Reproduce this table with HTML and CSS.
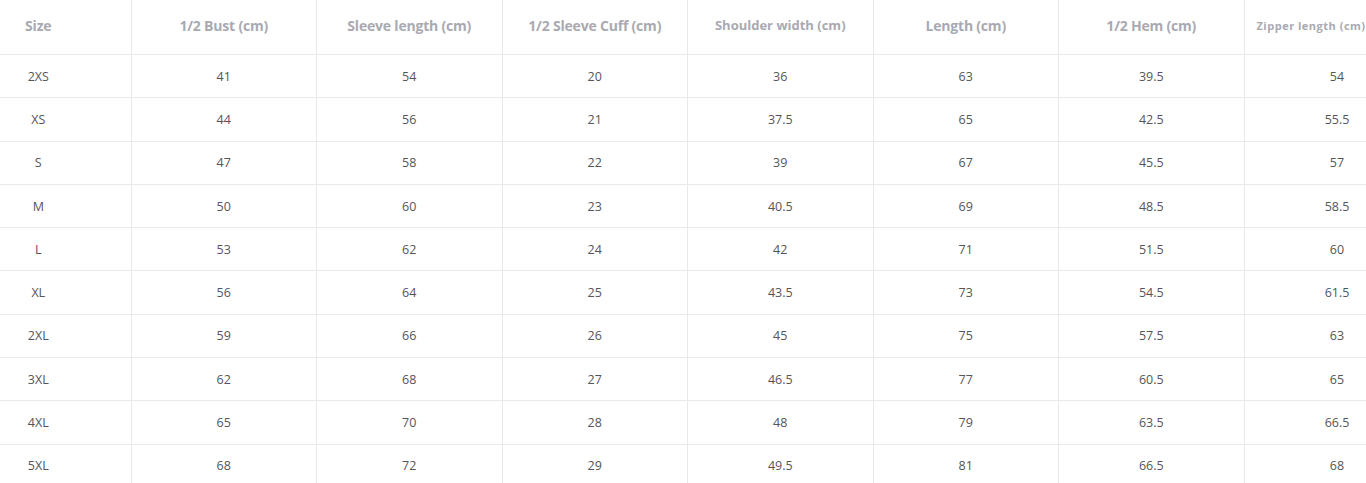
FILE: index.html
```html
<!DOCTYPE html>
<html>
<head>
<meta charset="utf-8">
<link rel="stylesheet" href="styles.css">
</head>
<body>
<div class="wrap">
<table class="size-table">
<colgroup>
<col class="c-size"><col class="c"><col class="c"><col class="c"><col class="c"><col class="c"><col class="c"><col class="c">
</colgroup>
<thead>
<tr>
<th class="first">Size</th>
<th>1/2 Bust (cm)</th>
<th>Sleeve length (cm)</th>
<th>1/2 Sleeve Cuff (cm)</th>
<th class="small">Shoulder width (cm)</th>
<th>Length (cm)</th>
<th>1/2 Hem (cm)</th>
<th class="zip">Zipper length (cm)</th>
</tr>
</thead>
<tbody>
<tr><td class="first">2XS</td><td>41</td><td>54</td><td>20</td><td>36</td><td>63</td><td>39.5</td><td>54</td></tr>
<tr><td class="first">XS</td><td>44</td><td>56</td><td>21</td><td>37.5</td><td>65</td><td>42.5</td><td>55.5</td></tr>
<tr><td class="first">S</td><td>47</td><td>58</td><td>22</td><td>39</td><td>67</td><td>45.5</td><td>57</td></tr>
<tr><td class="first">M</td><td>50</td><td>60</td><td>23</td><td>40.5</td><td>69</td><td>48.5</td><td>58.5</td></tr>
<tr><td class="first">L</td><td>53</td><td>62</td><td>24</td><td>42</td><td>71</td><td>51.5</td><td>60</td></tr>
<tr><td class="first">XL</td><td>56</td><td>64</td><td>25</td><td>43.5</td><td>73</td><td>54.5</td><td>61.5</td></tr>
<tr><td class="first">2XL</td><td>59</td><td>66</td><td>26</td><td>45</td><td>75</td><td>57.5</td><td>63</td></tr>
<tr><td class="first">3XL</td><td>62</td><td>68</td><td>27</td><td>46.5</td><td>77</td><td>60.5</td><td>65</td></tr>
<tr><td class="first">4XL</td><td>65</td><td>70</td><td>28</td><td>48</td><td>79</td><td>63.5</td><td>66.5</td></tr>
<tr><td class="first">5XL</td><td>68</td><td>72</td><td>29</td><td>49.5</td><td>81</td><td>66.5</td><td>68</td></tr>
</tbody>
</table>
</div>
</body>
</html>
```
FILE: styles.css
```css
html, body {
  margin: 0;
  padding: 0;
  background: #fff;
  overflow: hidden;
}
.wrap {
  width: 1366px;
  height: 483px;
  overflow: hidden;
}
.size-table {
  width: 1429.5px;
  table-layout: fixed;
  border-collapse: collapse;
  font-family: "Open Sans", "Noto Sans", sans-serif;
}
.c-size { width: 131px; }
.c { width: 185.5px; }
.size-table th,
.size-table td {
  text-align: center;
  vertical-align: middle;
  border-bottom: 1px solid #e9e9ec;
  border-left: 1px solid #e9e9ec;
  padding: 0;
}
.size-table th:first-child,
.size-table td:first-child {
  border-left: none;
}
.size-table th {
  height: 50px;
  padding-bottom: 4px;
  font-size: 14px;
  font-weight: 700;
  color: #a9a9b2;
  letter-spacing: -0.2px;
}
.size-table th.small {
  font-size: 13px;
  letter-spacing: 0;
}
.size-table th.zip {
  font-size: 11px;
  letter-spacing: 0.5px;
  text-align: left;
  padding-left: 12px;
}
.size-table td {
  height: 42.3px;
  font-size: 12.5px;
  color: #555558;
}
.size-table .first {
  text-align: center;
  padding-right: 54px;
}
```
